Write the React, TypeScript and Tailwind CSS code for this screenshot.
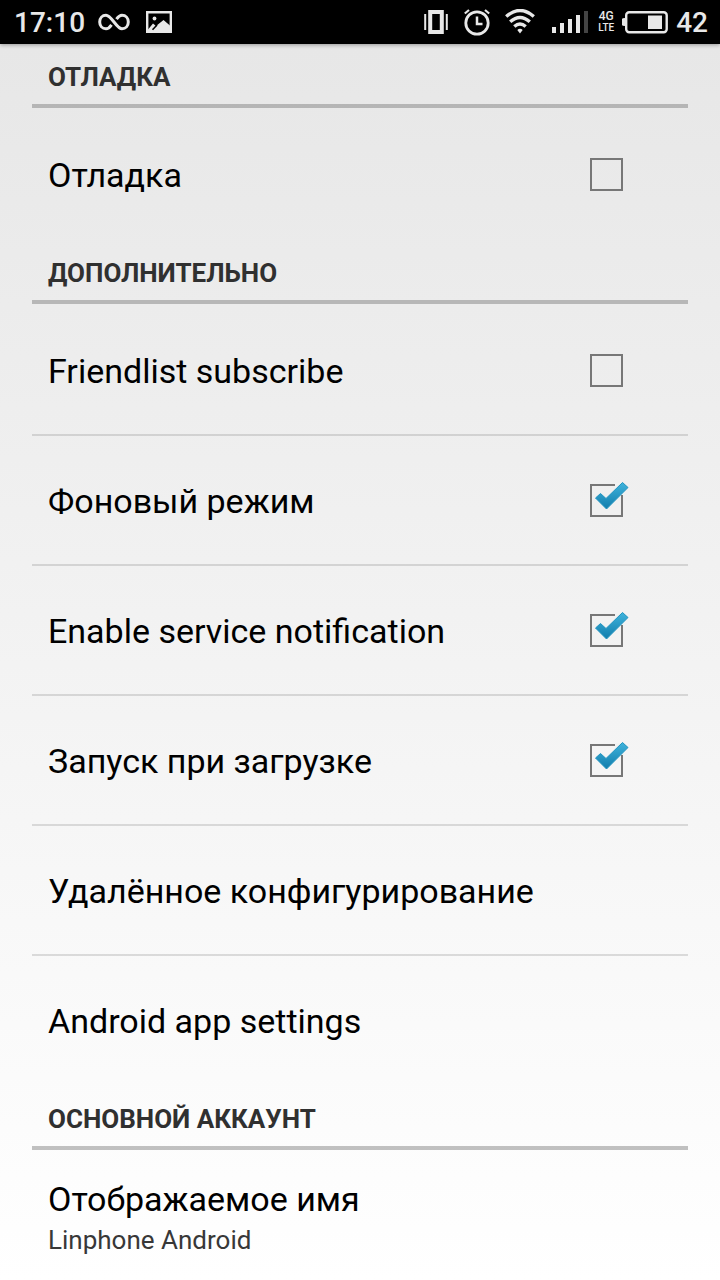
import { useState } from "react";

function StatusBar() {
  return (
    <header className="relative z-10 flex h-11 items-center justify-between bg-black pr-3 pl-[14px] text-[28px] font-medium leading-8 text-[#e8e8e8] shadow-[0_1px_4px_rgba(0,0,0,0.35)]">
      <div className="flex items-center">
        <span className="w-[84px] pt-0.5">17:10</span>
        <svg className="h-5 w-8" viewBox="0 0 32 20" fill="none" stroke="currentColor" strokeWidth="3" aria-hidden="true">
          <path d="M18.5 7.2C20.4 4.4 21.6 3.2 24 3.2C27.7 3.2 30.3 6.2 30.3 10C30.3 13.8 27.7 16.8 24 16.8C18.5 16.8 13.5 3.2 8 3.2C4.3 3.2 1.7 6.2 1.7 10C1.7 13.8 4.3 16.8 8 16.8C10.4 16.8 11.6 15.6 13.5 12.8" />
        </svg>
        <svg className="ml-4 h-[22px] w-[26px]" viewBox="0 0 26 22" aria-hidden="true">
          <path d="M1.2 1.2H24.800V20.800H1.200Z" fill="none" stroke="currentColor" strokeWidth="2.4" />
          <path d="M2 18.500L7 12.500L10 15L17.500 9L24.500 15V20.500H2Z" fill="currentColor" />
          <path d="M6.500 18.800L11 14" stroke="#000" strokeWidth="1.600" />
          <circle cx="8.500" cy="7.500" r="1.900" fill="currentColor" />
        </svg>
      </div>
      <div className="flex items-center">
        <svg className="h-6 w-6" viewBox="0 0 24 24" fill="none" stroke="currentColor" aria-hidden="true">
          <path d="M6.200 2H17.800V22H6.200Z" strokeWidth="4" />
          <path d="M1.200 4V20M22.800 4V20" strokeWidth="2" />
        </svg>
        <svg className="ml-4 h-[27px] w-[26px]" viewBox="0 0 26 27" fill="none" stroke="currentColor" aria-hidden="true">
          <circle cx="13" cy="14" r="11.200" strokeWidth="2.800" />
          <path d="M13 7.500V15H18.500" strokeWidth="2.500" />
          <path d="M.8 4.500L5 1M25.200 4.500L21 1" strokeWidth="2.200" />
        </svg>
        <svg className="ml-[15px] h-[26px] w-[30px]" viewBox="0 0 30 26" fill="none" stroke="currentColor" strokeWidth="3.400" aria-hidden="true">
          <path d="M1.200 7.500Q15-4.500 28.800 7.500M5.200 12.800Q15 4 24.800 12.800M9.300 17.500Q15 12.500 20.700 17.500" />
          <path d="M12.300 21Q15 18.500 17.700 21L15 24.500Z" fill="currentColor" stroke="none" />
        </svg>
        <svg className="ml-[17px] h-6 w-9" viewBox="0 0 36 24" fill="currentColor" aria-hidden="true">
          <path d="M0 17H4V23H0ZM8 13H12V23H8ZM16 9H20V23H16ZM24 5H28V23H24Z" />
          <path d="M32 1H36V23H32Z" fill="#444" />
        </svg>
        <span className="ml-[10px] flex w-4 flex-col items-center text-[12px] leading-3">
          <span>4G</span>
          <span className="text-[10px]">LTE</span>
        </span>
        <svg className="ml-2 h-6 w-[46px]" viewBox="0 0 46 24" aria-hidden="true">
          <rect x="4.200" y="2.200" width="40.500" height="20" rx="3" fill="none" stroke="currentColor" strokeWidth="2.400" />
          <path d="M0 9Q0 8 3 8V16Q0 16 0 15ZM26 5.500H40V19H26Z" fill="currentColor" />
        </svg>
        <span className="ml-2 pt-0.5">42</span>
      </div>
    </header>
  );
}

function SectionTitle({ children }: { children: string }) {
  return (
    <h2 className="mb-0.5 border-b-4 border-[#777777]/45 px-4 pt-5 pb-3 text-[26px] font-bold leading-[30px] text-[#303030]">
      {children}
    </h2>
  );
}

function CheckRow({ label, initial = false }: { label: string; initial?: boolean }) {
  const [checked, setChecked] = useState(initial);
  return (
    <label className="flex min-h-32 items-center justify-between pr-[65px] pl-4">
      <span className="pt-0.5 text-[34px] leading-10">{label}</span>
      <span className="relative flex">
        <input
          type="checkbox"
          checked={checked}
          onChange={(e) => setChecked(e.target.checked)}
          className="size-[33px] appearance-none border-2 border-[#777777]"
        />
        {checked && (
          <svg className="pointer-events-none absolute -top-[3px] left-1 h-8 w-9" viewBox="0 0 36 32" aria-hidden="true">
            <defs>
              <linearGradient id="tick" x1="0" y1="0" x2="0" y2="1">
                <stop offset="0" stopColor="#3fb3dc" />
                <stop offset="1" stopColor="#127dac" />
              </linearGradient>
            </defs>
            <path d="M21 2H30V14H26V8H21Z" fill="#f1f2f2" />
            <path d="M1.500 17L6.500 12.500L12 17.500L28.500 1.500L34 6.500L12.500 28Z" fill="url(#tick)" stroke="#2094c0" strokeWidth="1" strokeLinejoin="round" />
          </svg>
        )}
      </span>
    </label>
  );
}

function LinkRow({ label, summary }: { label: string; summary?: string }) {
  return (
    <button type="button" className="flex min-h-32 w-full flex-col justify-center px-4 pt-0.5 text-left">
      <span className="text-[34px] leading-[46px]">{label}</span>
      {summary && <span className="text-[26px] leading-9 text-[#383838]">{summary}</span>}
    </button>
  );
}

export default function App() {
  return (
    <div className="flex min-h-screen flex-col bg-white font-['Roboto',sans-serif] text-black">
      <StatusBar />
      <main className="grow bg-linear-to-b from-[#e7e7e7] to-white px-8">
        <section className="-mt-0.5">
          <SectionTitle>ОТЛАДКА</SectionTitle>
          <CheckRow label="Отладка" />
        </section>
        <section>
          <SectionTitle>ДОПОЛНИТЕЛЬНО</SectionTitle>
          <ul className="divide-y-2 divide-black/12">
            <li><CheckRow label="Friendlist subscribe" /></li>
            <li><CheckRow label="Фоновый режим" initial /></li>
            <li><CheckRow label="Enable service notification" initial /></li>
            <li><CheckRow label="Запуск при загрузке" initial /></li>
            <li><LinkRow label="Удалённое конфигурирование" /></li>
            <li><LinkRow label="Android app settings" /></li>
          </ul>
        </section>
        <section>
          <SectionTitle>ОСНОВНОЙ АККАУНТ</SectionTitle>
          <LinkRow label="Отображаемое имя" summary="Linphone Android" />
        </section>
      </main>
    </div>
  );
}
